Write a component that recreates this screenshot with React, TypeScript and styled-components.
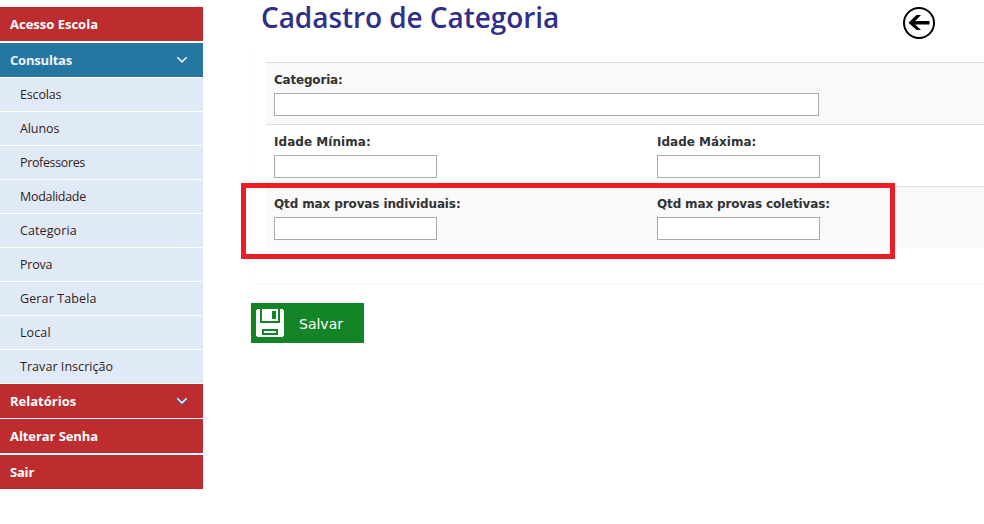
import React from "react";
import styled, { createGlobalStyle } from "styled-components";

const GlobalStyle = createGlobalStyle`
  * { box-sizing: border-box; }
  body { margin: 0; background: #fff; overflow: hidden; }
`;

const Page = styled.div`
  display: flex;
  width: 984px;
  height: 524px;
  overflow: hidden;
`;

const Sidebar = styled.nav`
  width: 203px;
  flex: none;
  padding-top: 7px;
  font-family: "Trebuchet MS", "Open Sans", sans-serif;
`;

const MenuHeading = styled.div<{ $open?: boolean; $gap?: number; $track?: number }>`
  display: flex;
  align-items: center;
  justify-content: space-between;
  height: 34px;
  margin-bottom: ${(p) => p.$gap ?? 0}px;
  padding: 0 15px 0 10px;
  background: ${(p) => (p.$open ? "#2377a1" : "#bd2d30")};
  color: ${(p) => (p.$open ? "#eef3f6" : "#fff")};
  font-size: 13px;
  font-weight: 700;
  letter-spacing: ${(p) => p.$track ?? 0}px;
  white-space: nowrap;
`;

const MenuItem = styled.div<{ $track?: number }>`
  height: 34px;
  padding-left: 20px;
  border-bottom: 1px solid #fff;
  background: #e0eaf6;
  color: #331c20;
  font-size: 12.5px;
  line-height: 33px;
  letter-spacing: ${(p) => p.$track ?? 0}px;
  white-space: nowrap;
`;

const Content = styled.main`
  position: relative;
  flex: 1;
  min-width: 0;
  padding-left: 47px;
`;

const Header = styled.header`
  display: flex;
  justify-content: space-between;
  height: 50px;
  padding: 0 48px 0 11px;
`;

const Title = styled.h1`
  margin: 0;
  color: #30308a;
  font: 600 28px/35px "Trebuchet MS", "Open Sans", sans-serif;
  letter-spacing: -0.07px;
  white-space: nowrap;
`;

const BackIcon = styled.svg`
  width: 34px;
  height: 34px;
  margin-top: 6px;
`;

const Card = styled.section`
  height: 235px;
  padding: 12px 0 0 15px;
  border: solid #fafafa;
  border-width: 0 0 2px 1px;
  border-bottom-left-radius: 4px;
`;

const FormRow = styled.div<{ $shaded?: boolean }>`
  display: grid;
  grid-template-columns: 383px 1fr;
  height: 62px;
  padding: 9px 0 0 8px;
  border-top: 1px solid #ddd;
  background: ${(p) => (p.$shaded ? "#f9f9f9" : "#fff")};
`;

const Field = styled.label`
  display: flex;
  flex-direction: column;
  gap: 5px;
`;

const FieldLabel = styled.span<{ $track?: number }>`
  color: #333;
  font: 700 12px/16px "DejaVu Sans", Verdana, sans-serif;
  letter-spacing: ${(p) => p.$track ?? 0}px;
  white-space: nowrap;
`;

const TextInput = styled.input<{ $wide?: boolean }>`
  width: ${(p) => (p.$wide ? 545 : 163)}px;
  height: 23px;
  padding: 0 4px;
  border: 1px solid #a9a9a9;
  border-radius: 0;
  background: #fff;
  outline: none;
`;

const Highlight = styled.div`
  position: absolute;
  left: 38px;
  top: 183px;
  width: 654px;
  height: 76px;
  border: 5px solid #ee1c25;
  pointer-events: none;
`;

const SaveButton = styled.button`
  display: flex;
  align-items: center;
  gap: 15px;
  width: 113px;
  height: 40px;
  margin: 18px 0 0 1px;
  padding: 0 0 0 5px;
  border: 0;
  background: #138527;
  color: #fff;
  font: 14px/20px "DejaVu Sans", Verdana, sans-serif;
`;

const SaveText = styled.span`
  padding-top: 2px;
`;

const Chevron = ({ outlined }: { outlined?: boolean }) => (
  <svg width="12" height="8" viewBox="0 0 12 8" fill="none">
    {outlined && <path d="M1 1.3 6 6.3 11 1.3" stroke="#5a5a80" strokeWidth="3" />}
    <path d="M1.3 1.2 6 5.9 10.7 1.2" stroke={outlined ? "#d9f1fa" : "#eef6fa"} strokeWidth="1.5" />
  </svg>
);

const Floppy = () => (
  <svg width="28" height="28" viewBox="0 0 28 28" shapeRendering="crispEdges">
    <path d="M1 0H27V1H28V27H27V28H1V27H0V1H1Z" fill="#fff" />
    <path d="M4 0H6V12H22V0H24V14H4Z" fill="#138527" />
    <path d="M16 2H20V10H16Z" fill="#138527" />
    <path d="M6 20H22V26H6ZM8 22V24H20V22Z" fill="#138527" fillRule="evenodd" />
  </svg>
);

const items: [string, number][] = [
  ["Escolas", -0.15],
  ["Alunos", -0.1],
  ["Professores", -0.36],
  ["Modalidade", -0.3],
  ["Categoria", 0.1],
  ["Prova", -0.2],
  ["Gerar Tabela", 0.12],
  ["Local", 0.1],
  ["Travar Inscrição", 0.05],
];

export default function App() {
  return (
    <>
      <GlobalStyle />
      <Page>
        <Sidebar>
          <MenuHeading $gap={2}>Acesso Escola</MenuHeading>
          <MenuHeading $open $gap={1} $track={-0.2}>
            Consultas
            <Chevron />
          </MenuHeading>
          {items.map(([name, track]) => (
            <MenuItem key={name} $track={track}>{name}</MenuItem>
          ))}
          <MenuHeading $gap={1}>
            Relatórios
            <Chevron outlined />
          </MenuHeading>
          <MenuHeading $gap={2} $track={-0.08}>Alterar Senha</MenuHeading>
          <MenuHeading $track={-0.2}>Sair</MenuHeading>
        </Sidebar>
        <Content>
          <Header>
            <Title>Cadastro de Categoria</Title>
            <BackIcon viewBox="0 0 34 34">
              <circle cx="17" cy="17" r="15" fill="none" stroke="#000" strokeWidth="2" />
              <path d="M6.5 16.8 14.5 9H19L13.2 15.1H27.5V18.4H13.2L19 24H14.5Z" fill="#000" />
            </BackIcon>
          </Header>
          <Card>
            <FormRow $shaded>
              <Field>
                <FieldLabel $track={-0.2}>Categoria:</FieldLabel>
                <TextInput $wide />
              </Field>
            </FormRow>
            <FormRow>
              <Field>
                <FieldLabel $track={0.05}>Idade Mínima:</FieldLabel>
                <TextInput />
              </Field>
              <Field>
                <FieldLabel>Idade Máxima:</FieldLabel>
                <TextInput />
              </Field>
            </FormRow>
            <FormRow $shaded>
              <Field>
                <FieldLabel $track={-0.12}>Qtd max provas individuais:</FieldLabel>
                <TextInput />
              </Field>
              <Field>
                <FieldLabel $track={-0.15}>Qtd max provas coletivas:</FieldLabel>
                <TextInput />
              </Field>
            </FormRow>
          </Card>
          <SaveButton type="button">
            <Floppy />
            <SaveText>Salvar</SaveText>
          </SaveButton>
          <Highlight />
        </Content>
      </Page>
    </>
  );
}
